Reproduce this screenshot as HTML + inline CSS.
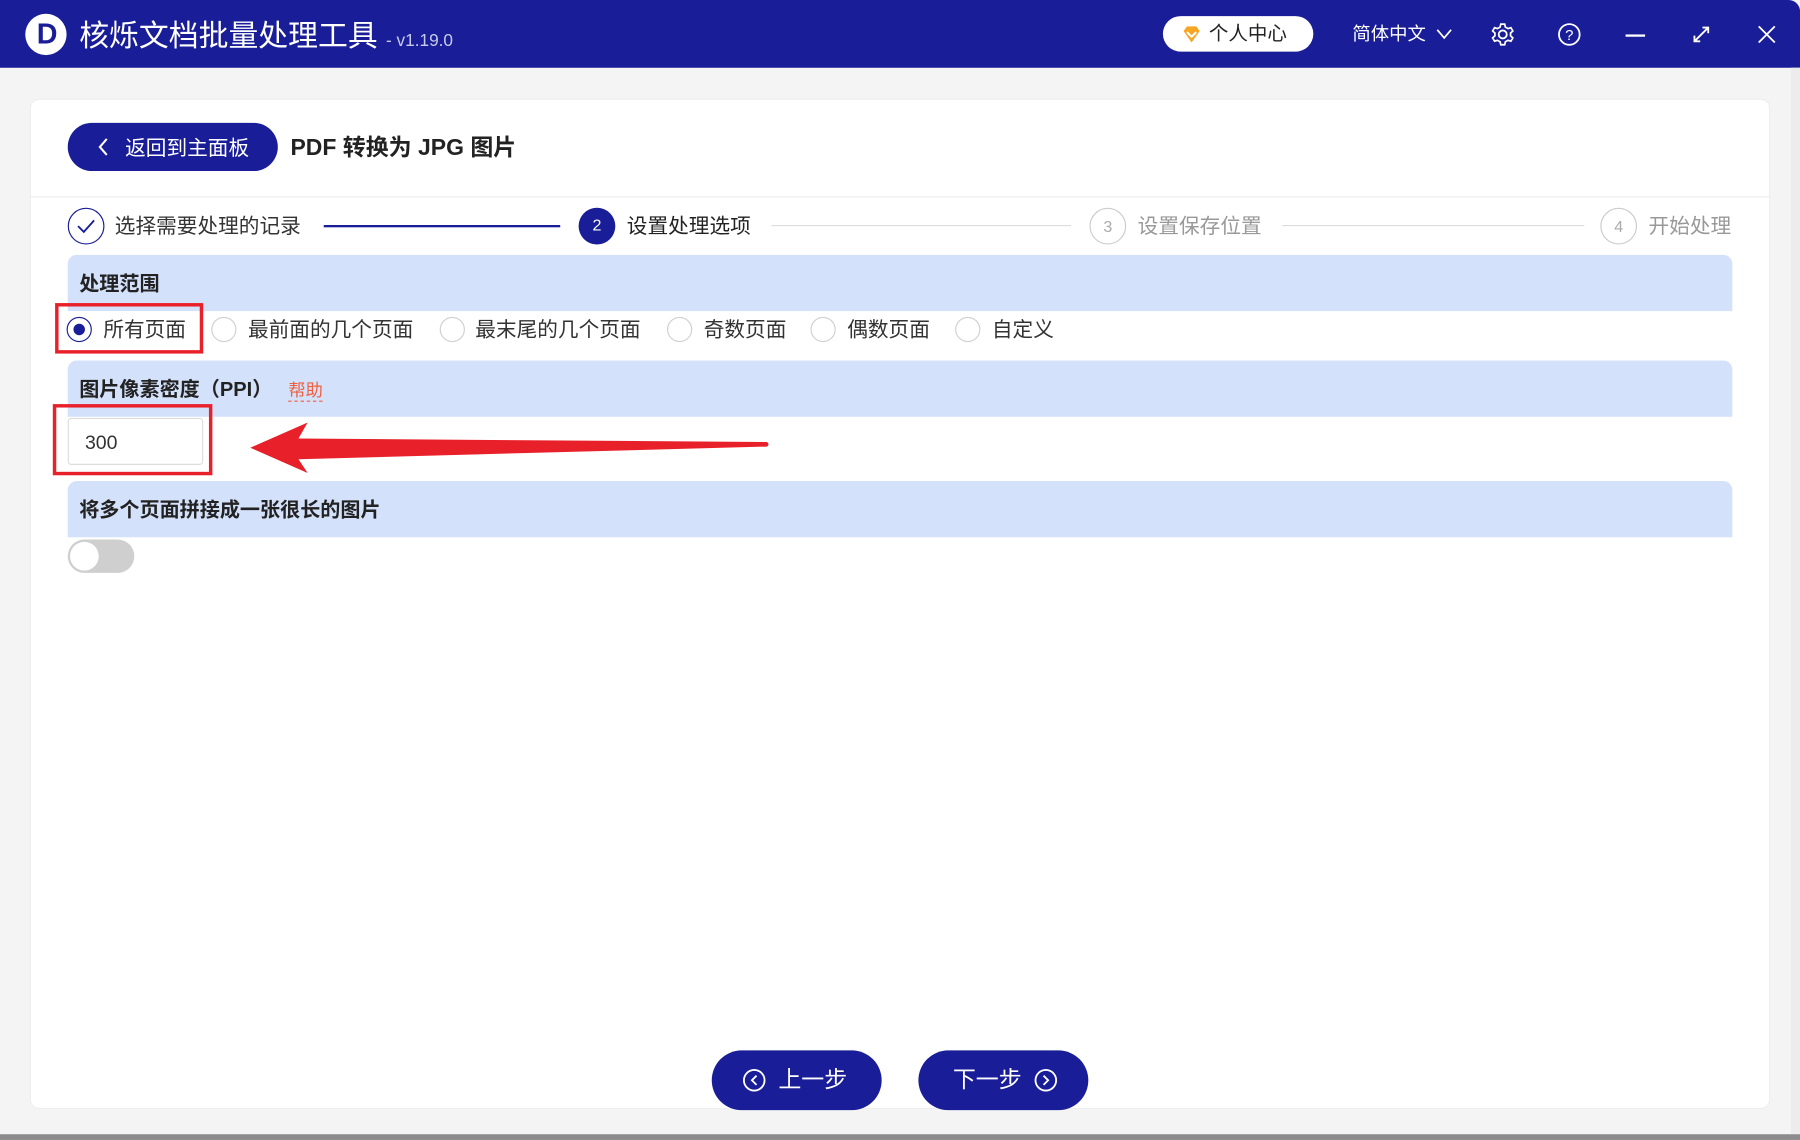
<!DOCTYPE html>
<html><head><meta charset="utf-8"><style>
*{margin:0;padding:0;box-sizing:border-box}
html,body{width:1800px;height:1140px;overflow:hidden;background:#9a9a9a}
#w{position:absolute;left:0;top:0;width:1568px;height:993px;transform:scale(1.148);transform-origin:0 0;font-family:"Liberation Sans","Noto Sans CJK SC",sans-serif;background:#f4f4f4;overflow:hidden}
.a{position:absolute}
.top{left:0;top:0;width:1568px;height:59px;background:#191d97;border-top-right-radius:10px}
.band{position:absolute;left:59px;width:1450px;height:49px;background:#d4e1fb;border-radius:8px 8px 0 0;font-weight:bold;font-size:17.5px;color:#222;padding:12px 0 0 10px}
.rad{position:absolute;top:276px;width:22px;height:22px;border:1px solid #d0d0d0;border-radius:50%;background:#fff}
.rt{position:absolute;top:275px;font-size:18px;color:#333;line-height:24px}
.st{position:absolute;top:183px;font-size:18px;line-height:28px}
.circ{position:absolute;top:181px;width:32px;height:32px;border-radius:50%;text-align:center;line-height:30px;font-size:14px}
.btn{position:absolute;top:915px;width:148px;height:52px;border-radius:26px;background:#191d97;color:#fff;font-size:20px;line-height:52px;text-align:center}
</style></head><body><div id="w">
<div class="a top"></div>
<div class="a" style="left:22px;top:12px;width:36px;height:36px;border-radius:50%;background:#fff"></div>
<div class="a" style="left:28px;top:12px;width:26px;height:36px;color:#191d97;font-weight:bold;font-size:25px;line-height:36px;text-align:center">D</div>
<div class="a" style="left:69px;top:13px;color:#fff;font-size:26px;line-height:36px">核烁文档批量处理工具 <span style="font-size:15px;color:#c8cbe8">- v1.19.0</span></div>
<div class="a" style="left:1013px;top:14px;width:131px;height:31px;background:#fff;border-radius:16px;font-size:17px;line-height:31px;color:#222;padding-left:40px">个人中心</div>
<svg class="a" style="left:1029px;top:21px" width="18" height="18" viewBox="0 0 18 18"><path d="M2 6 L5 2 H13 L16 6 L9 16Z" fill="#f5a623"/><path d="M5 7 L9 11 L13 7" stroke="#fff" stroke-width="1.8" fill="none"/></svg>
<div class="a" style="left:1178px;top:19px;color:#fff;font-size:16px;line-height:24px">简体中文</div>
<svg class="a" style="left:1250px;top:23px" width="16" height="14"><path d="M2 3 L8 10 L14 3" stroke="#fff" stroke-width="1.5" fill="none"/></svg>
<svg class="a" style="left:1298px;top:19px" width="22" height="22" viewBox="0 0 22 22"><circle cx="11" cy="11" r="3.5" stroke="#fff" stroke-width="1.6" fill="none"/><path d="M9.3 2h3.4l.6 2.6 2.3 1.3 2.5-.8 1.7 2.9-2 1.8v2.4l2 1.8-1.7 2.9-2.5-.8-2.3 1.3-.6 2.6H9.3l-.6-2.6-2.3-1.3-2.5.8-1.7-2.9 2-1.8V9.8l-2-1.8 1.7-2.9 2.5.8 2.3-1.3z" stroke="#fff" stroke-width="1.5" fill="none"/></svg>
<svg class="a" style="left:1356px;top:19px" width="22" height="22"><circle cx="11" cy="11" r="9" stroke="#fff" stroke-width="1.6" fill="none"/><text x="11" y="16" fill="#fff" font-size="13" text-anchor="middle" font-family="Liberation Sans">?</text></svg>
<div class="a" style="left:1416px;top:30px;width:17px;height:2px;background:#fff"></div>
<svg class="a" style="left:1473px;top:21px" width="18" height="18"><path d="M3 15 L15 3 M10 3 H15 V8 M3 10 V15 H8" stroke="#fff" stroke-width="1.6" fill="none"/></svg>
<svg class="a" style="left:1530px;top:21px" width="18" height="18"><path d="M2 2 L16 16 M16 2 L2 16" stroke="#fff" stroke-width="1.6"/></svg>
<div class="a" style="left:1560px;top:59px;width:8px;height:934px;background:#ececec"></div>
<div class="a" style="left:0;top:988px;width:1568px;height:5px;background:#8c8c8c"></div>
<div class="a" style="left:26px;top:86px;width:1516px;height:880px;background:#fff;border:1px solid #eee;border-radius:8px"></div>
<div class="a" style="left:27px;top:171px;width:1514px;height:1px;background:#ececec"></div>
<div class="a" style="left:59px;top:107px;width:183px;height:42px;border-radius:21px;background:#191d97;color:#fff;font-size:18px;line-height:44px;padding-left:50px">返回到主面板</div>
<svg class="a" style="left:84px;top:119px" width="12" height="18"><path d="M9 2 L3 9 L9 16" stroke="#fff" stroke-width="1.8" fill="none"/></svg>
<div class="a" style="left:253px;top:115px;font-size:20px;font-weight:bold;color:#222;line-height:28px">PDF 转换为 JPG 图片</div>
<div class="circ" style="left:59px;border:1.5px solid #191d97"></div>
<svg class="a" style="left:66px;top:189px" width="18" height="16"><path d="M2 8 L7 13 L16 3" stroke="#191d97" stroke-width="1.6" fill="none"/></svg>
<div class="st" style="left:100px;color:#333">选择需要处理的记录</div>
<div class="a" style="left:282px;top:196px;width:206px;height:2px;background:#191d97"></div>
<div class="circ" style="left:504px;background:#191d97;color:#fff">2</div>
<div class="st" style="left:546px;color:#222">设置处理选项</div>
<div class="a" style="left:672px;top:196px;width:261px;height:1px;background:#ddd"></div>
<div class="circ" style="left:949px;border:1px solid #ccc;color:#aaa">3</div>
<div class="st" style="left:991px;color:#999">设置保存位置</div>
<div class="a" style="left:1117px;top:196px;width:263px;height:1px;background:#ddd"></div>
<div class="circ" style="left:1394px;border:1px solid #ccc;color:#aaa">4</div>
<div class="st" style="left:1436px;color:#999">开始处理</div>
<div class="band" style="top:222px">处理范围</div>
<div class="rad" style="left:58px;border-color:#191d97"></div><div class="a" style="left:64px;top:282px;width:10px;height:10px;border-radius:50%;background:#191d97"></div>
<div class="rt" style="left:90px">所有页面</div>
<div class="rad" style="left:184px"></div><div class="rt" style="left:216px">最前面的几个页面</div>
<div class="rad" style="left:383px"></div><div class="rt" style="left:414px">最末尾的几个页面</div>
<div class="rad" style="left:581px"></div><div class="rt" style="left:613px">奇数页面</div>
<div class="rad" style="left:706px"></div><div class="rt" style="left:738px">偶数页面</div>
<div class="rad" style="left:832px"></div><div class="rt" style="left:864px">自定义</div>
<div class="a" style="left:48px;top:264px;width:129px;height:44px;border:3px solid #e8202a"></div>
<div class="band" style="top:314px">图片像素密度（PPI）<span style="color:#f0603c;font-weight:normal;font-size:15px;margin-left:14px;border-bottom:1px dashed #f0603c">帮助</span></div>
<div class="a" style="left:59px;top:364px;width:118px;height:41px;border:1px solid #ddd;border-radius:3px;font-size:17px;line-height:41px;padding-left:14px;color:#333">300</div>
<div class="a" style="left:46px;top:352px;width:139px;height:62px;border:3px solid #e8202a"></div>
<svg class="a" style="left:210px;top:360px" width="470" height="60"><path d="M8 30 L58 8 L50 22 L458 25 Q461 27 458 29 L50 40 L58 52 Z" fill="#e8202a"/></svg>
<div class="band" style="top:419px">将多个页面拼接成一张很长的图片</div>
<div class="a" style="left:59px;top:470px;width:58px;height:29px;border-radius:15px;background:#cfcfcf"></div>
<div class="a" style="left:61px;top:472px;width:25px;height:25px;border-radius:50%;background:#fff"></div>
<div class="btn" style="left:620px;padding-left:28px">上一步</div>
<svg class="a" style="left:646px;top:930px" width="22" height="22"><circle cx="11" cy="11" r="9" stroke="#fff" stroke-width="1.6" fill="none"/><path d="M13 7 L9 11 L13 15" stroke="#fff" stroke-width="1.6" fill="none"/></svg>
<div class="btn" style="left:800px;padding-right:28px">下一步</div>
<svg class="a" style="left:900px;top:930px" width="22" height="22"><circle cx="11" cy="11" r="9" stroke="#fff" stroke-width="1.6" fill="none"/><path d="M9 7 L13 11 L9 15" stroke="#fff" stroke-width="1.6" fill="none"/></svg>
</div></body></html>
